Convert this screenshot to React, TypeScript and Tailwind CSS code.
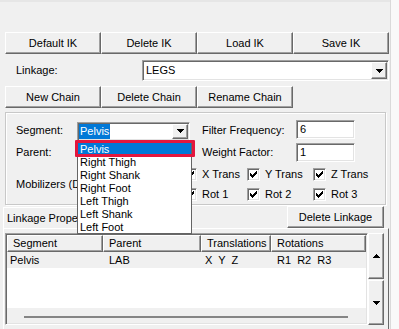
import React from "react";

const RAISED =
  "border border-t-white border-l-white border-r-[#696969] border-b-[#696969] shadow-[inset_-1px_-1px_0_#a0a0a0] bg-[#f0f0f0]";
const SUNKEN =
  "border border-t-[#a0a0a0] border-l-[#a0a0a0] border-r-white border-b-white shadow-[inset_1px_1px_0_#696969,inset_-1px_-1px_0_#e3e3e3] bg-white";

function Btn({ className, children }: { className: string; children?: React.ReactNode }) {
  return (
    <div className={`${className} ${RAISED} flex items-center justify-center shrink-0`}>
      {children}
    </div>
  );
}

function ArrowDown() {
  return (
    <svg width="7" height="4" viewBox="0 0 7 4" shapeRendering="crispEdges">
      <rect x="0" y="0" width="7" height="1" fill="#000" />
      <rect x="1" y="1" width="5" height="1" fill="#000" />
      <rect x="2" y="2" width="3" height="1" fill="#000" />
      <rect x="3" y="3" width="1" height="1" fill="#000" />
    </svg>
  );
}

function ArrowUp() {
  return (
    <svg width="7" height="4" viewBox="0 0 7 4" shapeRendering="crispEdges">
      <rect x="3" y="0" width="1" height="1" fill="#000" />
      <rect x="2" y="1" width="3" height="1" fill="#000" />
      <rect x="1" y="2" width="5" height="1" fill="#000" />
      <rect x="0" y="3" width="7" height="1" fill="#000" />
    </svg>
  );
}

function Combo({ className, children }: { className: string; children?: React.ReactNode }) {
  return (
    <div className={`${className} ${SUNKEN} flex p-[1px] shrink-0`}>
      <div className="flex-1 flex items-center overflow-hidden">{children}</div>
      <div className={`w-[16px] ${RAISED} flex items-center justify-center`}>
        <ArrowDown />
      </div>
    </div>
  );
}

function Field({ className, children }: { className: string; children?: React.ReactNode }) {
  return (
    <div className={`${className} ${SUNKEN} flex items-center pl-[3px] shrink-0`}>{children}</div>
  );
}

function Check() {
  const px: [number, number, number][] = [
    [6, 0, 1],
    [5, 1, 2],
    [0, 2, 1],
    [4, 2, 3],
    [0, 3, 2],
    [3, 3, 3],
    [0, 4, 5],
    [1, 5, 3],
    [2, 6, 1],
  ];
  return (
    <div className={`w-[13px] h-[13px] shrink-0 ${SUNKEN} flex items-center justify-center`}>
      <svg width="7" height="7" viewBox="0 0 7 7" shapeRendering="crispEdges">
        {px.map(([x, y, w], i) => (
          <rect key={i} x={x} y={y} width={w} height={1} fill="#000" />
        ))}
      </svg>
    </div>
  );
}

function CheckItem({ className, label }: { className: string; label: string }) {
  return (
    <div className={`${className} flex items-center`}>
      <Check />
      <span className="ml-[5px] whitespace-nowrap">{label}</span>
    </div>
  );
}

const HEAD =
  "h-full flex items-center pl-[5px] border border-t-white border-l-white border-r-[#696969] border-b-[#696969] shadow-[inset_-1px_-1px_0_#a0a0a0] bg-[#f0f0f0] whitespace-nowrap overflow-hidden";

export default function App() {
  const items = ["Pelvis", "Right Thigh", "Right Shank", "Right Foot", "Left Thigh", "Left Shank", "Left Foot"];
  return (
    <div className="w-[399px] h-[329px] bg-[#f0f0f0] flex overflow-hidden relative font-['Liberation_Sans',Arial,sans-serif] text-[11px] leading-none text-black">
      <div className="w-[390px] flex flex-col shrink-0">
        <div className="h-[32px]">
          <div className="h-[2px] bg-[#e6e6e6]" />
        </div>

        <div className="flex pl-[5px] h-[22px]">
          <Btn className="w-[96px] h-[22px]">Default IK</Btn>
          <Btn className="w-[96px] h-[22px]">Delete IK</Btn>
          <Btn className="w-[96px] h-[22px]">Load IK</Btn>
          <Btn className="w-[96px] h-[22px]">Save IK</Btn>
        </div>

        <div className="flex items-center mt-[6px] h-[21px] pl-[16px]">
          <span className="w-[126px]">Linkage:</span>
          <Combo className="w-[247px] h-[21px]">
            <span className="pl-[2px]">LEGS</span>
          </Combo>
        </div>

        <div className="flex pl-[5px] h-[22px] mt-[5px]">
          <Btn className="w-[96px] h-[22px]">New Chain</Btn>
          <Btn className="w-[96px] h-[22px]">Delete Chain</Btn>
          <Btn className="w-[96px] h-[22px]">Rename Chain</Btn>
        </div>

        <div className="mt-[4px] ml-[5px] w-[381px] h-[93px] border border-[#c8c8c8] shadow-[inset_1px_1px_0_#ffffff,1px_1px_0_#ffffff] pt-[7px] pl-[10px] flex flex-col shrink-0">
          <div className="flex items-center h-[20px]">
            <span className="w-[61px]">Segment:</span>
            <Combo className="w-[113px] h-[19px] mt-[2px]">
              <span className="bg-[#0078d7] text-white px-[1px] py-[2px]">Pelvis</span>
            </Combo>
            <div className="w-[12px]" />
            <span className="w-[94px] whitespace-nowrap">Filter Frequency:</span>
            <Field className="w-[59px] h-[19px] mb-[1px]">6</Field>
          </div>
          <div className="flex items-center h-[19px] mt-[3px]">
            <span className="w-[61px]">Parent:</span>
            <Field className="w-[113px] h-[19px]" />
            <div className="w-[12px]" />
            <span className="w-[94px] whitespace-nowrap">Weight Factor:</span>
            <Field className="w-[59px] h-[19px]">1</Field>
          </div>
          <div className="flex mt-[6px]">
            <div className="w-[168px] self-center whitespace-nowrap">Mobilizers (DOF):</div>
            <div className="flex flex-col gap-[7px]">
              <div className="flex h-[13px]">
                <CheckItem className="w-[63px]" label="X Trans" />
                <CheckItem className="w-[66px]" label="Y Trans" />
                <CheckItem className="w-[70px]" label="Z Trans" />
              </div>
              <div className="flex h-[13px]">
                <CheckItem className="w-[63px]" label="Rot 1" />
                <CheckItem className="w-[66px]" label="Rot 2" />
                <CheckItem className="w-[70px]" label="Rot 3" />
              </div>
            </div>
          </div>
        </div>

        <div className="flex justify-between mt-[1px] h-[22px]">
          <div className="ml-[3px] mt-[1px] w-[106px] h-[21px] border border-t-white border-l-white border-r-[#696969] border-b-0 shadow-[inset_-1px_0_0_#a0a0a0] flex items-center pl-[3px] whitespace-nowrap">
            Linkage Properties
          </div>
          <Btn className="w-[97px] h-[22px] mr-[6px]">Delete Linkage</Btn>
        </div>

        <div className="ml-[3px] w-[386px] flex-1 border-t border-l border-t-white border-l-white border-r border-r-[#696969] pt-[4px] pl-[1px] flex items-start">
          <div className={`w-[363px] h-[92px] ${SUNKEN} p-[1px] flex flex-col shrink-0`}>
            <div className="h-[17px] flex shrink-0">
              <div className={`w-[96px] ${HEAD}`}>Segment</div>
              <div className={`w-[98px] ${HEAD}`}>Parent</div>
              <div className={`w-[70px] ${HEAD}`}>Translations</div>
              <div className={`w-[95px] ${HEAD}`}>Rotations</div>
            </div>
            <div className="h-[16px] flex items-center bg-[#f0f0f0] shrink-0">
              <div className="w-[96px] pl-[3px]">Pelvis</div>
              <div className="w-[98px] pl-[6px]">LAB</div>
              <div className="w-[70px] pl-[4px] whitespace-pre">X  Y  Z</div>
              <div className="w-[95px] pl-[6px] whitespace-pre">R1  R2  R3</div>
            </div>
            <div className="flex-1 bg-white" />
            <div className="h-[15px] bg-[#f0f0f0] pt-[8px] pl-[17px] shrink-0">
              <div className="w-[324px] h-[2px] bg-[#858585]" />
            </div>
          </div>
          <div className="w-[16px] flex flex-col shrink-0">
            <Btn className="w-[16px] h-[46px]">
              <ArrowUp />
            </Btn>
            <Btn className="w-[16px] h-[45px] mt-[1px]">
              <ArrowDown />
            </Btn>
          </div>
        </div>
      </div>
      <div className="w-[1px] bg-[#dadada] shrink-0" />
      <div className="flex-1 bg-[#f9f9f9]" />

      <div className="absolute left-[77px] top-[140px] w-[115px] h-[94px] bg-white border border-[#646464] pt-[2px] overflow-hidden">
        {items.map((it, i) => (
          <div
            key={it}
            className={
              i === 0
                ? "h-[13px] leading-[13px] pl-[2px] bg-[#0078d7] text-white whitespace-nowrap"
                : "h-[13px] leading-[13px] pl-[2px] whitespace-nowrap"
            }
          >
            {it}
          </div>
        ))}
      </div>
      <div className="absolute left-[75px] top-[140px] w-[120px] h-[17px] border-[3px] border-[#e3173e] rounded-[1px]" />
    </div>
  );
}
